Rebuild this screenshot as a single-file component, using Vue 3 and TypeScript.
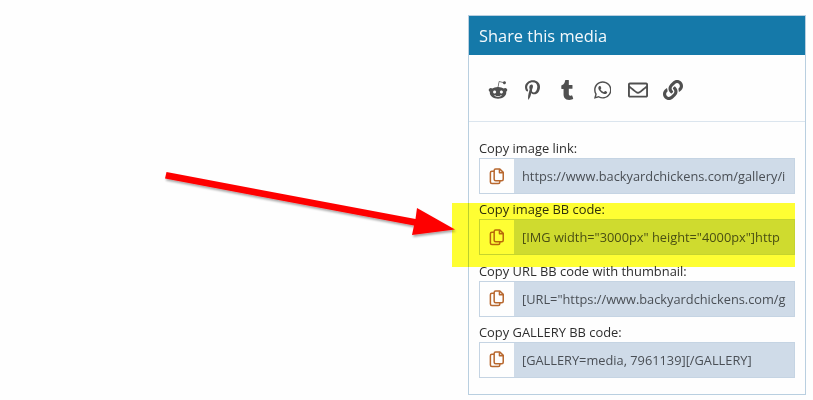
<script setup lang="ts">
const icons = [
  { box: '0 0 512 512', d: 'M440.3 203.5c-15 0-28.2 6.2-37.9 15.9-35.7-24.7-83.8-40.6-137.1-42.3L293 52.3l88.2 19.8c0 21.6 17.6 39.2 39.2 39.2 22 0 39.7-18.1 39.7-39.7s-17.6-39.7-39.7-39.7c-15.4 0-28.7 9.3-35.3 22l-97.4-21.6c-4.9-1.3-9.7 2.2-11 7.1L246.3 177c-52.9 2.2-100.5 18.1-136.3 42.8-9.7-10.1-23.4-16.3-38.4-16.3-55.6 0-73.8 74.6-22.9 100.1-1.8 7.9-2.6 16.3-2.6 24.7 0 83.8 94.4 151.7 210.3 151.7 116.4 0 210.8-67.9 210.8-151.7 0-8.4-.9-17.2-3.1-25.1 49.9-25.6 31.5-99.7-23.8-99.7zM129.4 308.9c0-22 17.6-39.7 39.7-39.7 21.6 0 39.2 17.6 39.2 39.7 0 21.6-17.6 39.2-39.2 39.2-22 .1-39.7-17.6-39.7-39.2zm214.3 93.5c-36.4 36.4-139.1 36.4-175.5 0-4-3.5-4-9.7 0-13.7 3.5-3.5 9.7-3.5 13.2 0 27.8 28.5 120 29 149 0 3.5-3.5 9.7-3.5 13.2 0 4.1 4 4.1 10.2.1 13.7zm-.8-54.2c-21.6 0-39.2-17.6-39.2-39.2 0-22 17.6-39.7 39.2-39.7 22 0 39.7 17.6 39.7 39.7-.1 21.5-17.7 39.2-39.7 39.2z' },
  { box: '0 0 384 512', d: 'M204 6.5C101.4 6.5 0 74.9 0 185.6 0 256 39.6 296 63.6 296c9.9 0 15.6-27.6 15.6-35.4 0-9.3-23.7-29.1-23.7-67.8 0-80.4 61.2-137.4 140.4-137.4 68.1 0 118.5 38.7 118.5 109.8 0 53.1-21.3 152.7-90.3 152.7-24.9 0-46.2-18-46.2-43.8 0-37.8 26.4-74.4 26.4-113.4 0-66.2-93.9-54.2-93.9 25.8 0 16.8 2.1 35.4 9.6 50.7-13.8 59.4-42 147.9-42 209.1 0 18.9 2.7 37.5 4.5 56.4 3.4 3.8 1.7 3.4 6.9 1.5 50.4-69 48.6-82.5 71.4-172.8 12.3 23.4 44.1 36 69.3 36 106.2 0 153.9-103.5 153.9-196.8C384 71.3 298.2 6.5 204 6.5z' },
  { box: '0 0 320 512', d: 'M309.8 480.3c-13.6 14.5-50 31.7-97.4 31.7-120.8 0-147-88.8-147-140.6v-144H17.9c-5.5 0-10-4.5-10-10v-68c0-7.2 4.5-13.6 11.3-16 62-21.8 81.5-76 84.3-117.1.8-11 6.5-16.3 16.1-16.3h70.9c5.5 0 10 4.5 10 10v115.2h83c5.5 0 10 4.4 10 9.9v81.7c0 5.5-4.5 10-10 10h-83.4V360c0 34.2 23.7 53.6 68 35.8 4.8-1.9 9-3.2 12.7-2.2 3.5.9 5.8 3.4 7.4 7.9l22 64.3c1.8 5 3.3 10.6-.4 14.5z' },
  { box: '0 0 448 512', d: 'M380.9 97.1C339 55.1 283.2 32 223.9 32c-122.4 0-222 99.6-222 222 0 39.1 10.2 77.3 29.6 111L0 480l117.7-30.9c32.4 17.7 68.9 27 106.1 27h.1c122.3 0 224.1-99.6 224.1-222 0-59.3-25.2-115-67.1-157zm-157 341.6c-33.2 0-65.7-8.9-94-25.7l-6.7-4-69.8 18.3L72 359.2l-4.4-7c-18.5-29.4-28.2-63.3-28.2-98.2 0-101.7 82.8-184.5 184.6-184.5 49.3 0 95.6 19.2 130.4 54.1 34.8 34.9 56.2 81.2 56.1 130.5 0 101.8-84.9 184.6-186.6 184.6zm101.2-138.2c-5.5-2.8-32.8-16.2-37.9-18-5.1-1.9-8.8-2.8-12.5 2.8-3.7 5.6-14.3 18-17.6 21.8-3.2 3.7-6.5 4.2-12 1.4-32.6-16.3-54-29.1-75.5-66-5.7-9.8 5.7-9.1 16.3-30.3 1.8-3.7.9-6.9-.5-9.7-1.4-2.8-12.5-30.1-17.1-41.2-4.5-10.8-9.1-9.3-12.5-9.5-3.2-.2-6.9-.2-10.6-.2-3.7 0-9.7 1.4-14.8 6.9-5.1 5.6-19.4 19-19.4 46.3 0 27.3 19.9 53.7 22.6 57.4 2.8 3.7 39.1 59.7 94.8 83.8 35.2 15.2 49 16.5 66.6 13.9 10.7-1.6 32.8-13.4 37.4-26.4 4.6-13 4.6-24.1 3.2-26.4-1.3-2.5-5-3.9-10.5-6.6z' },
  { box: '0 0 512 512', d: 'M464 64H48C21.49 64 0 85.49 0 112v288c0 26.51 21.49 48 48 48h416c26.51 0 48-21.49 48-48V112c0-26.51-21.49-48-48-48zm0 48v40.805c-22.422 18.259-58.168 46.651-134.587 106.49-16.841 13.247-50.201 45.072-73.413 44.701-23.208.375-56.579-31.459-73.413-44.701C106.18 199.465 70.425 171.067 48 152.805V112h416zM48 400V214.398c22.914 18.251 55.409 43.862 104.938 82.646 21.857 17.205 60.134 55.186 103.062 54.955 42.717.231 80.509-37.199 103.053-54.947 49.528-38.783 82.032-64.401 104.947-82.653V400H48z' },
  { box: '0 0 512 512', d: 'M326.612 185.391c59.747 59.809 58.927 155.698.36 214.59-.11.12-.24.25-.36.37l-67.2 67.2c-59.27 59.27-155.699 59.262-214.96 0-59.27-59.26-59.27-155.7 0-214.96l37.106-37.106c9.84-9.84 26.786-3.3 27.294 10.606.648 17.722 3.826 35.527 9.69 52.721 1.986 5.822.567 12.262-3.783 16.612l-13.087 13.087c-28.026 28.026-28.905 73.66-1.155 101.96 28.024 28.579 74.086 28.749 102.325.51l67.2-67.19c28.191-28.191 28.073-73.757 0-101.83-3.701-3.694-7.429-6.564-10.341-8.569a16.037 16.037 0 0 1-6.947-12.606c-.396-10.567 3.348-21.456 11.698-29.806l21.054-21.055c5.521-5.521 14.182-6.199 20.584-1.731a152.482 152.482 0 0 1 20.522 17.197zM467.547 44.449c-59.261-59.262-155.69-59.27-214.96 0l-67.2 67.2c-.12.12-.25.25-.36.37-58.566 58.892-59.387 154.781.36 214.59a152.454 152.454 0 0 0 20.521 17.196c6.402 4.468 15.064 3.789 20.584-1.731l21.054-21.055c8.35-8.35 12.094-19.239 11.698-29.806a16.037 16.037 0 0 0-6.947-12.606c-2.912-2.005-6.64-4.875-10.341-8.569-28.073-28.073-28.191-73.639 0-101.83l67.2-67.19c28.239-28.239 74.3-28.069 102.325.51 27.75 28.3 26.872 73.934-1.155 101.96l-13.087 13.087c-4.35 4.35-5.769 10.79-3.783 16.612 5.864 17.194 9.042 34.999 9.69 52.721.509 13.906 17.454 20.446 27.294 10.606l37.106-37.106c59.271-59.259 59.271-155.699.001-214.959z' },
]
const rows = [
  { label: 'Copy image link:', value: 'https://www.backyardchickens.com/gallery/i' },
  { label: 'Copy image BB code:', value: '[IMG width="3000px" height="4000px"]http' },
  { label: 'Copy URL BB code with thumbnail:', value: '[URL="https://www.backyardchickens.com/g' },
  { label: 'Copy GALLERY BB code:', value: '[GALLERY=media, 7961139][/GALLERY]' },
]
</script>

<template>
  <div class="page">
    <section class="panel">
      <h2 class="head">Share this media</h2>
      <div class="share">
        <span v-for="(icon, i) in icons" :key="i" class="cell">
          <svg class="share-icon" :viewBox="icon.box" height="20" fill="currentColor"><path :d="icon.d" /></svg>
        </span>
      </div>
      <div class="body">
        <div v-for="row in rows" :key="row.label" class="row">
          <div class="label">{{ row.label }}</div>
          <div class="field">
            <span class="btn">
              <svg width="16" height="17" viewBox="0 0 16 18" fill="none" stroke="currentColor" stroke-width="1.6" stroke-linejoin="round">
                <path d="M5 3.5H2.6a1.6 1.6 0 0 0-1.6 1.6v9.8a1.6 1.6 0 0 0 1.6 1.6h6.8a1.6 1.6 0 0 0 1.6-1.6V13.5" />
                <path d="M5 2.6A1.6 1.6 0 0 1 6.6 1H11l3.6 3.6v7.3a1.6 1.6 0 0 1-1.6 1.6H6.6A1.6 1.6 0 0 1 5 11.9z" />
                <path d="M10.6 1.2v3.8h3.8" />
              </svg>
            </span>
            <span class="value">{{ row.value }}</span>
          </div>
        </div>
      </div>
    </section>
    <div class="highlight"></div>
    <svg class="arrow" width="813" height="400" viewBox="0 0 813 400">
      <defs>
        <filter id="sh" x="-5%" y="-20%" width="110%" height="150%">
          <feDropShadow dx="1" dy="2" stdDeviation="1.2" flood-color="#000" flood-opacity="0.35" />
        </filter>
      </defs>
      <path d="M166.5 172 L415.5 219 L417 208 L455 229.500 L412 235 L414 225.500 L165 178.500 Z" fill="#fe0000" filter="url(#sh)" />
    </svg>
  </div>
</template>

<style>
html, body { margin: 0; background: #fefefe; }
</style>

<style scoped>
.page {
  position: relative;
  width: 813px;
  height: 400px;
  overflow: hidden;
  background: #fefefe;
  font-family: "Open Sans", "Noto Sans", sans-serif;
  display: flex;
  justify-content: flex-end;
  align-items: flex-start;
  padding: 15px 7px 0 0;
  box-sizing: border-box;
}
.panel {
  width: 338px;
  height: 380px;
  box-sizing: border-box;
  border: 1px solid #b9cfe0;
  background: #fefefe;
}
.head {
  margin: 0;
  height: 39px;
  padding-left: 10px;
  background: #1579a9;
  color: #f4f9fc;
  font-size: 16.400px;
  font-weight: 400;
  line-height: 40px;
}
.share {
  display: flex;
  height: 67px;
  padding: 3px 0 0 11px;
  box-sizing: border-box;
  align-items: center;
  color: #505050;
  border-bottom: 1px solid #dbe5ee;
}
.cell {
  width: 35px;
  display: flex;
  justify-content: center;
}
.body {
  padding: 18px 10px 0;
  display: flex;
  flex-direction: column;
  gap: 7.300px;
}
.label {
  height: 18px;
  font-size: 12.900px;
  line-height: 17px;
  color: #2e2e2e;
}
.field {
  display: flex;
  height: 36px;
  box-sizing: border-box;
  background: #cfdbe8;
  border: 1px solid #c5d4e3;
}
.btn {
  width: 34px;
  background: #fefefe;
  color: #b8682f;
  display: flex;
  align-items: center;
  justify-content: center;
}
.value {
  padding-left: 8px;
  font-size: 12.800px;
  line-height: 34px;
  color: #4a4f55;
  white-space: nowrap;
  overflow: hidden;
}
.highlight {
  position: absolute;
  left: 452px;
  top: 203px;
  width: 343px;
  height: 64px;
  background: #ffff33;
  mix-blend-mode: multiply;
}
.arrow {
  position: absolute;
  left: 0;
  top: 0;
  pointer-events: none;
}
</style>
